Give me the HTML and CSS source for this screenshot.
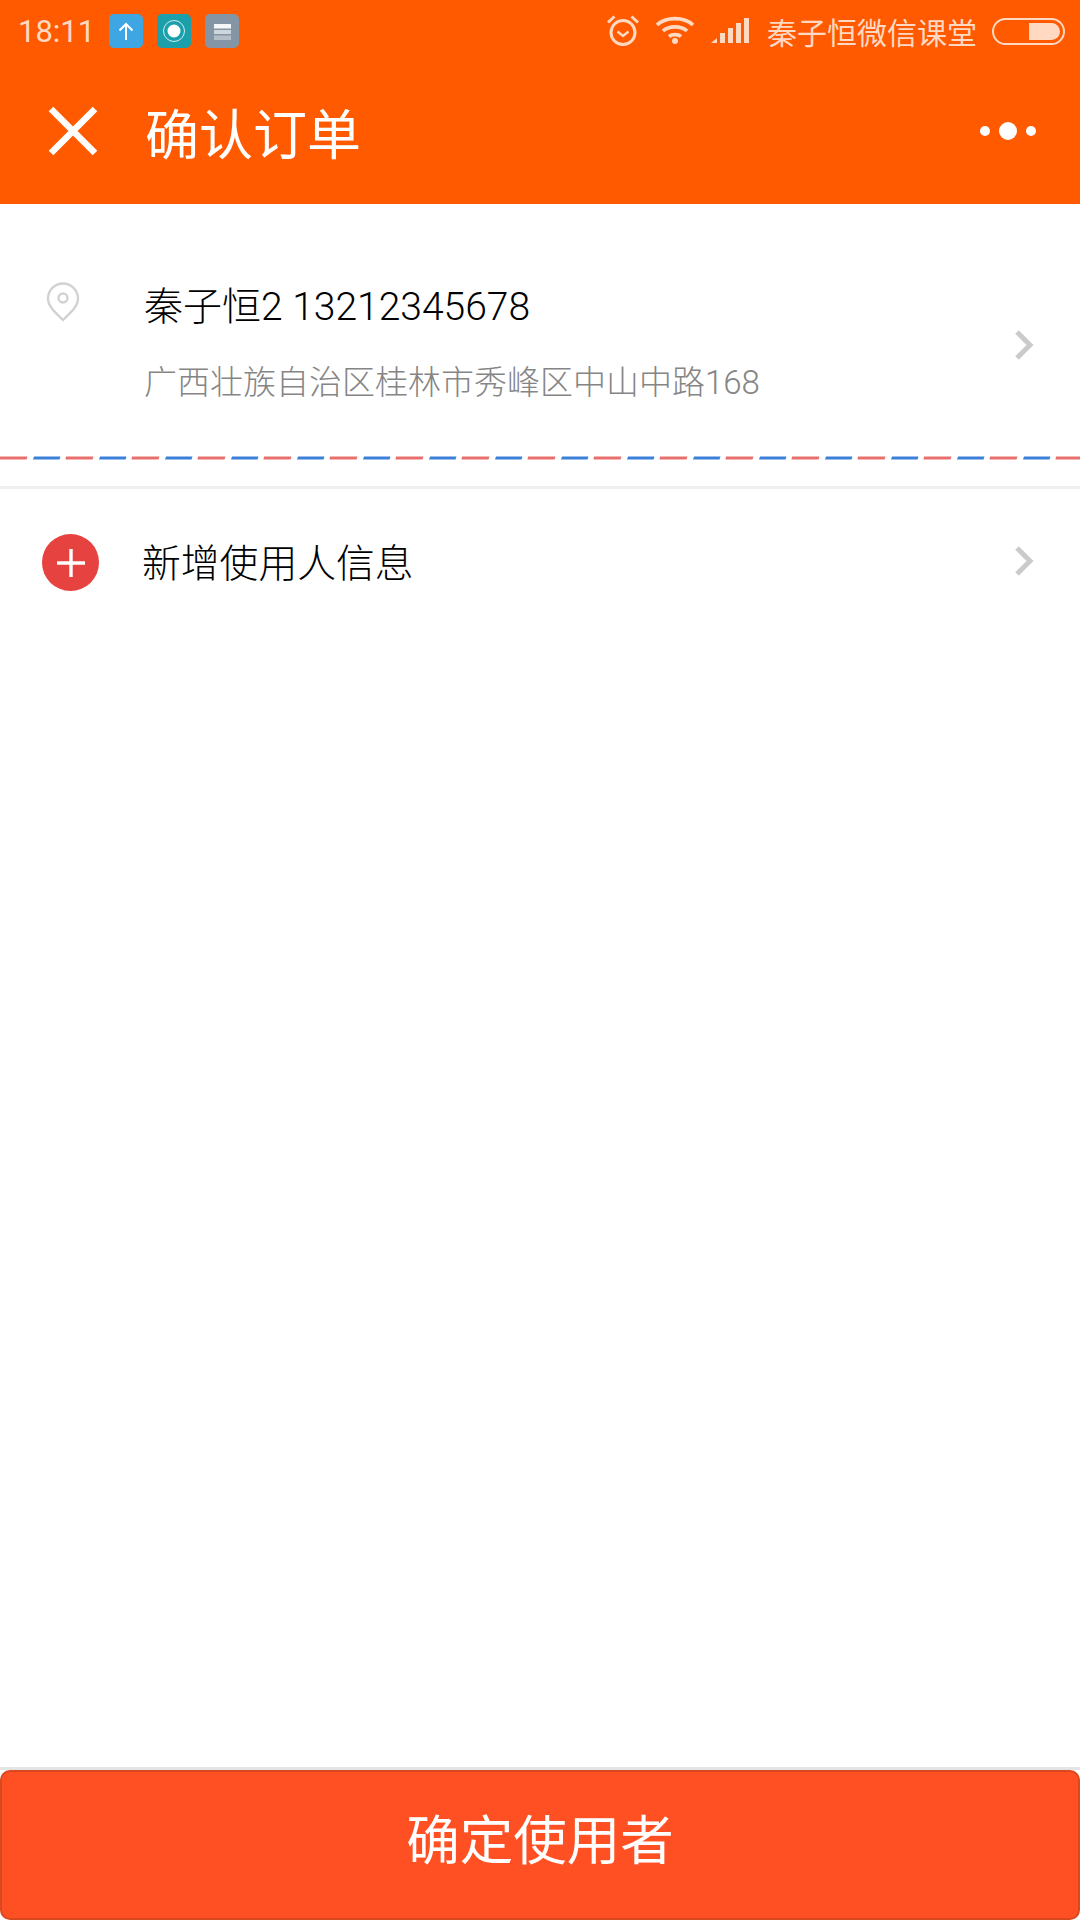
FILE: index.html
```html
<!DOCTYPE html>
<html lang="zh-CN">

<head>
  <meta charset="UTF-8">
  <meta name="viewport" content="width=device-width, initial-scale=1.0">
  <title>确认订单</title>
  <link rel="stylesheet" href="styles.css">
</head>

<body>
  <div class="page">
    <header class="header">
      <div class="status-bar">
        <div class="status-left">
          <span class="time">18:11</span>
          <span class="app-icon app-blue">
            <svg width="34" height="34" viewBox="0 0 34 34"><path d="M17 26V10M10.500 16.500L17 10l6.500 6.500" fill="none" stroke="#fff" stroke-width="2"/></svg>
          </span>
          <span class="app-icon app-teal">
            <svg width="34" height="34" viewBox="0 0 34 34"><circle cx="17" cy="17" r="10.500" fill="none" stroke="#cfeef0" stroke-width="1"/><circle cx="17" cy="17" r="6.500" fill="#fff"/></svg>
          </span>
          <span class="app-icon app-grey">
            <svg width="34" height="34" viewBox="0 0 34 34"><rect x="9" y="10" width="17" height="4.500" fill="#f4f6f8"/><rect x="9" y="16" width="17" height="4" fill="#ced5db"/><rect x="9" y="21.500" width="17" height="4.500" fill="#b4bec6"/></svg>
          </span>
        </div>
        <div class="status-right">
          <svg class="alarm" width="34" height="34" viewBox="0 0 34 34" fill="none" stroke="#ffd9c2" stroke-width="3">
            <circle cx="17" cy="19.500" r="12"/>
            <path d="M11.500 18.500l5.500 4.500 5.500-4.500" stroke-width="2.400"/>
            <path d="M2 9.500L8.500 3.500M32 9.500L25.500 3.500"/>
          </svg>
          <svg class="wifi" width="40" height="30" viewBox="0 0 40 30" fill="none" stroke="#ffd9c2" stroke-width="3.600">
            <path d="M2 10C11 1.500 29 1.500 38 10"/>
            <path d="M8 16C14 10.500 26 10.500 32 16"/>
            <path d="M14 21.500C17 19 23 19 26 21.500"/>
            <circle cx="20" cy="26" r="3" fill="#ffd9c2" stroke="none"/>
          </svg>
          <svg class="signal" width="38" height="26" viewBox="0 0 38 26" fill="#ffd9c2">
            <path d="M0 25l6-5v5z"/>
            <rect x="9" y="15" width="5" height="10"/>
            <rect x="17" y="10" width="5" height="15"/>
            <rect x="25" y="5" width="5" height="20"/>
            <rect x="33" y="0" width="5" height="25"/>
          </svg>
          <span class="carrier">秦子恒微信课堂</span>
          <span class="battery"><span class="battery-level"></span></span>
        </div>
      </div>
      <div class="title-bar">
        <svg class="close" width="50" height="50" viewBox="0 0 50 50"><path d="M3 3L47 47M47 3L3 47" stroke="#fff" stroke-width="6.500" fill="none"/></svg>
        <h1 class="title">确认订单</h1>
        <div class="more"><i></i><i class="big"></i><i></i></div>
      </div>
    </header>

    <main class="content">
      <section class="address">
        <svg class="pin" width="34" height="40" viewBox="0 0 34 40" fill="none" stroke="#d2d2d2" stroke-width="2.400">
          <path d="M17 38C11 32 2 25 2 16.500A15 15 0 0 1 32 16.500C32 25 23 32 17 38Z"/>
          <circle cx="17" cy="16" r="4.500"/>
        </svg>
        <div class="address-text">
          <div class="contact">秦子恒2 13212345678</div>
          <div class="detail">广西壮族自治区桂林市秀峰区中山中路168</div>
        </div>
        <svg class="chevron" width="20" height="30" viewBox="0 0 20 30"><path d="M3 2L16 15L3 28" fill="none" stroke="#cbcbcb" stroke-width="5"/></svg>
      </section>

      <svg class="airmail" width="1080" height="4">
        <defs>
          <pattern id="stripe" width="66" height="4" patternUnits="userSpaceOnUse">
            <path d="M0 0.500H27.500L26.500 3.500H0Z" fill="#e86f6c"/>
            <path d="M34 0.500H60.500L59.500 3.500H33Z" fill="#3b7fd9"/>
            <path d="M66 0.500H67V3.500H65.500Z" fill="#e86f6c"/>
          </pattern>
        </defs>
        <rect width="1080" height="4" fill="url(#stripe)"/>
      </svg>

      <section class="user-row">
        <span class="add-icon">
          <svg width="30" height="30" viewBox="0 0 30 30"><path d="M15 1V29M1 15H29" stroke="#fff" stroke-width="3.400"/></svg>
        </span>
        <span class="user-label">新增使用人信息</span>
        <svg class="chevron" width="20" height="30" viewBox="0 0 20 30"><path d="M3 2L16 15L3 28" fill="none" stroke="#cbcbcb" stroke-width="5"/></svg>
      </section>
    </main>

    <footer class="footer">
      <button class="confirm">确定使用者</button>
    </footer>
  </div>
</body>

</html>
```

FILE: styles.css
```css
* {
  box-sizing: border-box;
}

body {
  margin: 0;
  background: #fff;
  font-family: Roboto, "Noto Sans CJK SC", sans-serif;
  font-weight: 400;
}

.page {
  width: 1080px;
  height: 1920px;
  display: flex;
  flex-direction: column;
}

/* header */
.header {
  height: 204px;
  background: #ff5a00;
  flex-shrink: 0;
}

.status-bar {
  height: 62px;
  padding: 0 15px 0 18px;
  display: flex;
  justify-content: space-between;
  align-items: center;
}

.status-left,
.status-right {
  display: flex;
  align-items: center;
}

.time {
  width: 91px;
  font-size: 31px;
  color: #ffd9c2;
}

.app-icon {
  width: 34px;
  height: 34px;
  margin-right: 14px;
  border-radius: 5px;
  display: block;
}

.app-icon svg {
  display: block;
}

.app-blue {
  background: #3ea6e3;
}

.app-teal {
  background: #1a9fab;
}

.app-grey {
  background: #8496a6;
}

.alarm {
  margin: 0 15px 3px 0;
}

.wifi {
  margin: 0 16px 3px 0;
}

.signal {
  margin-right: 18px;
}

.carrier {
  font-size: 30px;
  color: #ffd9c2;
  margin-right: 15px;
}

.battery {
  width: 73px;
  height: 27px;
  padding: 3px;
  border: 2px solid #ffd9c2;
  border-radius: 14px;
  display: flex;
  justify-content: flex-end;
}

.battery-level {
  width: 31px;
  background: #ffd9c2;
  border-radius: 0 10px 10px 0;
}

.title-bar {
  height: 142px;
  padding: 0 44px 4px 48px;
  display: flex;
  align-items: center;
}

.close {
  flex-shrink: 0;
}

.title {
  margin: 0 0 0 47px;
  flex: 1;
  font-size: 54px;
  font-weight: 400;
  color: #fff;
}

.more {
  display: flex;
  align-items: center;
  gap: 9px;
}

.more i {
  width: 10px;
  height: 10px;
  border-radius: 50%;
  background: #fff;
}

.more i.big {
  width: 18px;
  height: 18px;
}

/* content */
.content {
  flex: 1;
}

.address {
  height: 252px;
  padding: 78px 46px 0 46px;
  display: flex;
  align-items: flex-start;
}

.pin {
  flex-shrink: 0;
}

.address-text {
  margin-left: 64px;
  flex: 1;
  font-weight: 300;
}

.contact {
  font-size: 39px;
  line-height: 50px;
  color: #000;
}

.detail {
  margin-top: 28px;
  font-size: 33px;
  line-height: 46px;
  color: #858585;
}

.address .chevron {
  margin-top: 48px;
}

.chevron {
  flex-shrink: 0;
}

.airmail {
  display: block;
  margin-bottom: 26px;
}

.user-row {
  height: 150px;
  padding: 0 46px 0 42px;
  border-top: 3px solid #efefef;
  display: flex;
  align-items: center;
}

.add-icon {
  width: 57px;
  height: 57px;
  border-radius: 50%;
  background: #e64340;
  display: flex;
  align-items: center;
  justify-content: center;
  flex-shrink: 0;
}

.user-label {
  margin: 0 0 6px 43px;
  flex: 1;
  font-size: 38.800px;
  font-weight: 300;
  color: #000;
}

.user-row .chevron {
  margin-bottom: 4px;
}

/* footer */
.footer {
  height: 153px;
  flex-shrink: 0;
  border-top: 3px solid #e4e4e4;
}

.confirm {
  width: 100%;
  height: 150px;
  padding: 0 0 18px;
  border: 2px solid #d9491f;
  border-radius: 10px;
  background: #ff5023;
  color: #fff;
  font-family: inherit;
  font-weight: 400;
  font-size: 53.500px;
}
```
